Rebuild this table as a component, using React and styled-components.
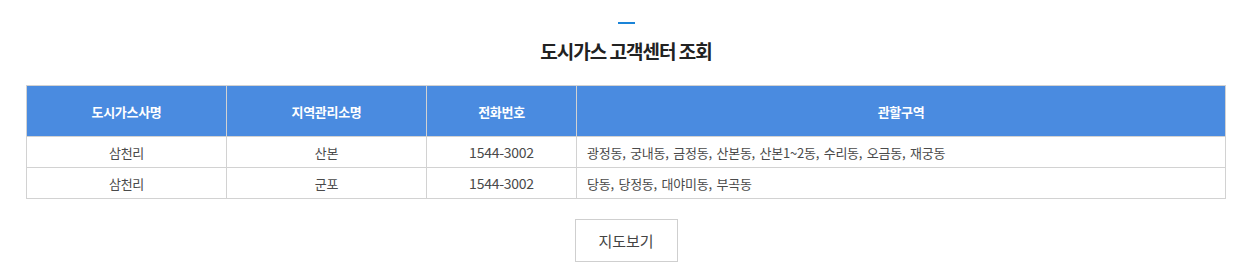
import React from "react";
import styled, { createGlobalStyle } from "styled-components";

const GlobalStyle = createGlobalStyle`
  html, body {
    margin: 0;
    padding: 0;
    background: #fff;
  }
  body {
    font-family: "Noto Sans CJK KR", "Noto Sans", sans-serif;
    color: #444;
  }
`;

const rows = [
  {
    company: "삼천리",
    office: "산본",
    phone: "1544-3002",
    area: "광정동, 궁내동, 금정동, 산본동, 산본1~2동, 수리동, 오금동, 재궁동",
  },
  {
    company: "삼천리",
    office: "군포",
    phone: "1544-3002",
    area: "당동, 당정동, 대야미동, 부곡동",
  },
];

const App = () => {
  return (
    <>
      <GlobalStyle />
      <Section>
        <Heading>
          <Bar />
          <Title>도시가스 고객센터 조회</Title>
        </Heading>
        <Table>
          <colgroup>
            <col width="200" />
            <col width="200" />
            <col width="150" />
            <col />
          </colgroup>
          <thead>
            <tr>
              <Th>도시가스사명</Th>
              <Th>지역관리소명</Th>
              <Th>전화번호</Th>
              <Th>관할구역</Th>
            </tr>
          </thead>
          <tbody>
            {rows.map((row, i) => (
              <tr key={i}>
                <Td>{row.company}</Td>
                <Td>{row.office}</Td>
                <Td $size={14}>{row.phone}</Td>
                <Td $left>{row.area}</Td>
              </tr>
            ))}
          </tbody>
        </Table>
        <ButtonRow>
          <MapButton type="button">지도보기</MapButton>
        </ButtonRow>
      </Section>
    </>
  );
};

const Section = styled.section`
  width: 1200px;
  margin-left: 26px;
  padding-top: 22px;
`;

const Heading = styled.div`
  display: flex;
  flex-direction: column;
  align-items: center;
`;

const Bar = styled.span`
  display: block;
  width: 17px;
  height: 2px;
  background: #1a84d8;
`;

const Title = styled.h2`
  margin: 13px 0 0;
  font-size: 19px;
  font-weight: 700;
  line-height: 28px;
  color: #222;
  letter-spacing: -1px;
`;

const Table = styled.table`
  width: 100%;
  margin-top: 20px;
  border-collapse: collapse;
  table-layout: fixed;
  border: 1px solid #d2d2d2;
`;

const Th = styled.th`
  height: 50px;
  padding: 0;
  background: #4a8be0;
  color: #fff;
  font-size: 13px;
  font-weight: 700;
  text-align: center;
  border-left: 1px solid #d2d2d2;
  letter-spacing: -0.3px;
`;

const Td = styled.td`
  height: 30px;
  padding: 0 ${(p) => (p.$left ? "10px" : "0")};
  font-size: ${(p) => p.$size || 13}px;
  color: #4a4a4a;
  text-align: ${(p) => (p.$left ? "left" : "center")};
  border: 1px solid #d2d2d2;
  letter-spacing: -0.25px;
  word-spacing: ${(p) => (p.$left ? "2px" : "0")};
`;

const ButtonRow = styled.div`
  display: flex;
  justify-content: center;
  margin-top: 20px;
`;

const MapButton = styled.button`
  width: 103px;
  height: 43px;
  border: 1px solid #cfcfcf;
  background: #fff;
  font-family: inherit;
  font-size: 15px;
  color: #444;
  cursor: pointer;
`;

export default App;
